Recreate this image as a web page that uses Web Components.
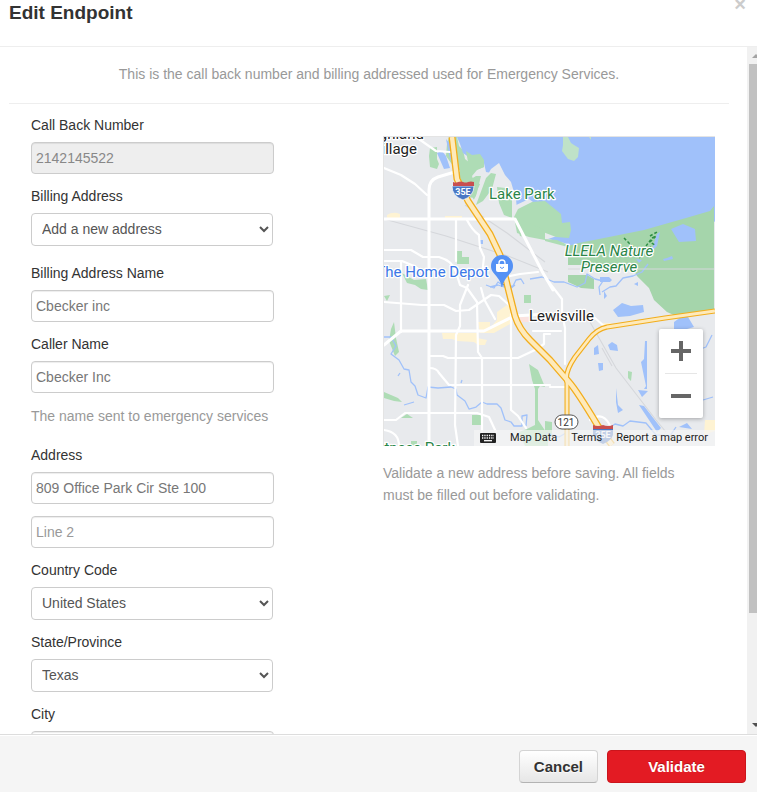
<!DOCTYPE html>
<html lang="en">
<head>
<meta charset="utf-8">
<title>Edit Endpoint</title>
<style>
  html, body { margin: 0; height: 100%; }
  body { font: 14px/20px "Liberation Sans", Arial, sans-serif; color: #333; background: #fff; }
</style>
</head>
<body>
<modal-dialog heading="Edit Endpoint">
  <endpoint-form></endpoint-form>
  <action-button slot="actions">Cancel</action-button>
  <action-button slot="actions" primary>Validate</action-button>
</modal-dialog>

<template id="modal-dialog">
  <style>
    :host { display: flex; flex-direction: column; height: 100vh; overflow: hidden; }
    header { display: flex; justify-content: space-between; align-items: flex-start; padding: 0 11px 20px 9px; border-bottom: 1px solid #eee; }
    h1 { margin: 0; font-size: 19px; line-height: 26px; }
    .close { border: 0; padding: 0; background: none; color: #ccc; font: bold 20px/8px "Liberation Sans", Arial, sans-serif; }
    main { flex: 1; min-height: 0; display: flex; }
    .content { flex: 1; min-width: 0; overflow: hidden; }
    footer { display: flex; justify-content: flex-end; gap: 9px; padding: 15px 11px 9px; background: #f5f5f5; border-top: 1px solid #ddd; box-shadow: inset 0 1px 0 #fff; }
  </style>
  <header><h1></h1><button class="close" type="button" aria-label="Close">×</button></header>
  <main><div class="content"><slot></slot></div><scroll-rail></scroll-rail></main>
  <footer><slot name="actions"></slot></footer>
</template>

<template id="scroll-rail">
  <style>
    :host { display: flex; flex-direction: column; width: 10px; overflow: hidden; background: #f1f1f1; }
    svg { display: block; width: 15px; height: 17px; flex: none; }
    .track { flex: 1; }
    .thumb { height: 84%; margin-left: 2px; background: #c1c1c1; }
  </style>
  <svg viewBox="0 0 15 17"><path d="M5 11h8L9 7z" fill="#a3a3a3"/></svg>
  <div class="track"><div class="thumb"></div></div>
  <svg viewBox="0 0 15 17"><path d="M5 6h8l-4 4z" fill="#505050"/></svg>
</template>

<template id="action-button">
  <style>
    :host { display: block; }
    button { height: 33px; padding: 0 14px; box-sizing: border-box; border: 1px solid #d4d4d4; border-bottom-color: #b3b3b3; border-radius: 4px; background: linear-gradient(#fff, #e6e6e6); color: #333; font: bold 15px/20px "Liberation Sans", Arial, sans-serif; text-shadow: 0 1px 1px rgba(255,255,255,.75); }
    :host([primary]) button { min-width: 139px; background: #e31b23; border-color: #cb151c; color: #fff; text-shadow: 0 -1px 0 rgba(0,0,0,.25); }
  </style>
  <button type="button"><slot></slot></button>
</template>

<template id="form-field">
  <style>
    :host { display: block; margin-bottom: 12px; }
    label { display: block; margin-bottom: 7px; }
    label:empty { display: none; }
    input, select { display: block; box-sizing: border-box; border: 1px solid #ccc; border-radius: 4px; background: #fff; font: inherit; }
    input { width: 243px; height: 32px; padding: 0 4px; color: #777; box-shadow: inset 0 1px 1px rgba(0,0,0,.075); }
    select { width: 242px; height: 33px; padding: 3px 8px 5px 6px; color: #555; }
    input:disabled { background: #eee; color: #888; }
    input::placeholder { color: #999; }
    p { margin: 13px 0 19px; color: #999; }
  </style>
  <label for="control"></label>
</template>

<template id="endpoint-form">
  <style>
    :host { display: block; padding: 0 18px 0 9px; }
    .intro { margin: 0; padding: 17px 0 19px; border-bottom: 1px solid #eee; text-align: center; color: #999; }
    .columns { display: grid; grid-template-columns: 352px minmax(0, 1fr); padding-top: 11px; }
    .fields { padding-left: 22px; }
    .fields form-field.spaced { margin-bottom: 17px; }
    .place { padding: 21px 14px 0 22px; }
    .place p { margin: 16px 0 0; padding-right: 20px; line-height: 22px; color: #999; }
  </style>
  <p class="intro">This is the call back number and billing addressed used for Emergency Services.</p>
  <div class="columns">
    <div class="fields">
      <form-field label="Call Back Number" value="2142145522" disabled></form-field>
      <form-field class="spaced" label="Billing Address" options="Add a new address"></form-field>
      <form-field label="Billing Address Name" value="Cbecker inc"></form-field>
      <form-field label="Caller Name" value="Cbecker Inc" hint="The name sent to emergency services"></form-field>
      <form-field label="Address" value="809 Office Park Cir Ste 100"></form-field>
      <form-field placeholder="Line 2"></form-field>
      <form-field label="Country Code" options="United States"></form-field>
      <form-field label="State/Province" options="Texas"></form-field>
      <form-field label="City"></form-field>
    </div>
    <div class="place">
      <street-map></street-map>
      <p>Validate a new address before saving. All fields must be filled out before validating.</p>
    </div>
  </div>
</template>

<template id="street-map">
  <style>
    :host { display: block; position: relative; overflow: hidden; border: 1px solid #e4e4e4; border-width: 1px 0 0 1px; font-family: Roboto, sans-serif; }
    .map { display: block; width: 100%; height: 309px; }
    .zoom { position: absolute; right: 12px; bottom: 28px; width: 44px; background: #fff; border-radius: 2px; box-shadow: 0 1px 4px rgba(0,0,0,.3); }
    .zoom button { display: block; width: 44px; height: 44px; padding: 12px; border: 0; background: none; }
    .zoom svg { display: block; width: 20px; height: 20px; }
    .zoom hr { margin: 0 6px; border: 0; height: 1px; background: #e6e6e6; }
    .legal { position: absolute; right: 0; bottom: 0; display: flex; align-items: center; gap: 14px; height: 16px; padding: 0 7px 0 6px; background: rgba(245,245,245,.7); font-size: 11px; line-height: 16px; }
    .legal a { color: #222; text-decoration: none; }
    .legal button { border: 0; padding: 0; background: none; color: #222; font: inherit; }
    .legal svg { display: block; }
    .r { fill: none; stroke: #fff; stroke-linejoin: round; stroke-linecap: round; }
    text { font-family: Roboto, sans-serif; paint-order: stroke; stroke: #fff; stroke-width: 2.5px; stroke-linejoin: round; }
  </style>
  <svg class="map" viewBox="384 137 331 309" preserveAspectRatio="xMidYMid slice" role="img" aria-label="Map of Lewisville">
    <rect x="100" y="100" width="900" height="400" fill="#e8eaed"/>
    <g fill="#aedcb5">
      <path d="M449 137h8l2 9 4 4 2 9 5 4 5-5 6 2 3 7-7 3-5 6 2 6 6 2-4 9-5 5-8-10-5-17-7-8-5-7 1-12z"/>
      <path d="M430 148l7-1v12l2 5-2 5-7-2-1-11z"/>
      <path d="M457 251h5v6h7v7h-12zM524 295h7v8h-7zM472 415h9v10h-9z"/>
      <path d="M402 273l12 7 12-1 2 11-7-1-6-4-8-2zM391 329l3-7 2 16 3 14-4 4-6-15zM384 392l14 6 4 4-8-1-10-3zM401 418l6-4 6 4zM411 441h6v5h-6zM384 296l6-1-3 6z"/>
      <path d="M529 364l9 6 7 17-5-1-2 3v31l10 15v11h-23l-6-14 8-3 8-4V389l-3-9z"/>
      <path d="M545 421l7 1v14l-7 1zM628 371l4 1-1 9-3-3z"/>
    </g>
    <path fill="#a0c1fa" d="M457 137l3 7 3 9 7 5 4-3 10 8 2 9 11 2 8 9 4 9 5 14 15-7 16 12 5 1 9 17-2 7-12 4 14 8 18 7 65-13 42-12 36-10v-86z"/>
    <path fill="#a0c1fa" d="M437 153l5-2 4 5 4 12-6 1zM446 139l5 6 5 18-6-4z"/>
    <path fill="#aedcb5" d="M466 151l6 4 8-1 4 6 0 7-8 3-8-8zM471 179l5-3 5 0-3 12-3 13-7-9z"/>
    <path fill="#e8eaed" d="M486 178l5-9 8-6 6 12 6 7 5 17 2 22-18-14-10-9-10 4-8 1z"/>
    <path fill="#aedcb5" d="M486 178l5-5 5 1-4 15-9 12-7 4zM497 187l8 1 7 10 0 20-8-3-5-12z"/>
    <path d="M514 217l4-8 14-7 13-1 16 13 1 9 8-1 1 8-2 8-13-1-13-5-8 5 6 4-21-5z" fill="#aedcb5"/>
    <path d="M516 222l15 6 14 10 23 6v26l-20-12-24-16z" fill="#e8eaed"/>
    <path d="M514 217l31 13v10l-16-3-12-4zM545 239l12 1 11 5v2l-23-6z" fill="#aedcb5"/>
    <path d="M563 137h5l3 6 3 2 5 3-1 9-4 4-6-2-6-8 1-6zM589 137h2v3z" fill="#bfe2c8"/>
    <path d="M568 246l11-3 65-13 42-12 24-7 4-5v105l-38 5-9-4-13-12-5-12-12-12-6-11h-63zM568 275h19l7 4v10l-13-1-13-6z" fill="#a5d5ab"/>
    <g fill="#a0c1fa">
      <path d="M671 229l12-5 12 5 1 12-17 1zM663 259l4-1 5-2 1 3-9 2zM636 259l6 1-3 3zM600 277h9l3 3-2 2h-10zM634 284l4-2v4zM657 234l3-2-3 14-6 6z"/>
      <path d="M613 310l9-7 9 3 12-1 1 7-14 4-12 1zM674 322l7-5 7 0 6 10-14 4-6-2zM608 345l4-3 5 3 1 6-8-1zM594 348l4-3 1 9-5 1zM598 363h5v7l-4 1zM638 390l10 1-6 6zM616 388l2 17 5 5-5 3-2-11zM639 405l5 1 17 22-4 4-6-9zM645 341h2v48h-3l2-3-5-24 3-3zM604 291l3 5-3 3zM679 427l8-4 5 6zM480 240l3 0v4h-3z"/>
    </g>
    <path d="M501 284h3v3h-3z" fill="#4280ef"/>
    <g fill="none" stroke="#a0c1fa" stroke-width="1.3" stroke-linejoin="round">
      <path d="M384 337l7 0 5 9-5 8 8 6 5 9 5 1 2 12 4 4 3 9 8 3 2-11 10 1 13-1 5 2 1 6 8 6 4 8 7-2 6-5 5 2 10 0 4 4 4 12 6 2 3 4h8l0-10 5-1-1 11"/>
      <path d="M486 285l8 3 4-6 7 5 8-1 3-6 5-1 3 5M530 279l12-2 12 5 10 0 13 5 8-4 2-9 8 5 8 2-4 6 1 8M602 292l8-5 6-1 7-8 10-2 9-4 6-8M490 287l8-2 12 4 5-4M546 433l13 4 7-4 3-15M608 429l7-5 8 2 7-5 16 2 10 12 14 1 6-9M698 350l8-3 6-12M703 400l10-3M398 376l2-3M462 380l-1 3M404 405l10-3"/>
    </g>
    <path d="M387 215q6-4 13-1v5h-13zM445 216h17v4h-17zM478 322h12v6l7-8 0-8 10-7 5 2v16l-18 10-14 0zM442 333h35v5l10 2-2 5h-7l-4-3-17-1-5-2h-9zM603 323h8v5h-8zM705 420h10v11l-11 4z" fill="#fef3d3"/>
    <path d="M520 317h9v5h-9z" fill="#fbe3df"/>
    <g fill="none" stroke="#d5d7db" stroke-width="1.100">
      <path d="M384 219l62 17 62 20 40 16M465 205l42 28 38 29M568 269h146M590 322l26 46 40 52 10 12M602 348l10 18"/>
    </g>
    <g class="r" stroke-width="3">
      <path d="M429 446V190q0-10 9-13l20-6M384 219h131l28 54 10 17M384 345l17-14h83l30-15 33-2"/>
    </g>
    <g class="r" stroke-width="2.200">
      <path d="M384 168l17 7 14 9 12 11M384 250h27l12 7h16q14 4 17 15l4 13 7 3 10 14 1 50 4 6v92M384 302l38 3h22l12 6 13-1 22-15 8 1 10 9"/>
      <path d="M416 137l20 14 14 1M456 220v41M467 220q5 10 12 15l1 13 4 9-2 19M384 261h18l12 5 11 8M401 262v70M468 285l-8 20v21l-4 9-1 90 3 21M429 356h14l5 2 70 0 17-8 9-6 0-10h6M429 368q8 0 10 5l10 12h101M511 314v96l7 6 8 12M481 288l3 11 11 20M384 420h12l9-7h72l12 4 7 15M384 430q15 2 15 16M505 277l15-3 18-2"/>
      <path d="M533 331h28M550 387h15M545 277l17 22v14l3 15v36M595 318l9 8M590 420q14-10 21 8"/>
    </g>
    <g fill="none" stroke-linejoin="round">
      <g stroke="#f2ad1c">
        <path stroke-width="7" d="M452 137l5 42 11 22 22 33 10 21 8 33 7 28q4 13 15 24l20 20 19 22q8 9 29 44l14 19"/>
        <path stroke-width="5" d="M567 446v-63q-3-10 8-26l14-18q8-10 18-12l58-9 50-7"/>
      </g>
      <g stroke="#feeabb">
        <path stroke-width="4.400" d="M452 137l5 42 11 22 22 33 10 21 8 33 7 28q4 13 15 24l20 20 19 22q8 9 29 44l14 19"/>
        <path stroke-width="2.800" d="M567 446v-63q-3-10 8-26l14-18q8-10 18-12l58-9 50-7"/>
      </g>
    </g>
    <g fill="none" stroke="#2f8f46" stroke-width="1.500" stroke-dasharray="3 2"><path d="M624 238l8 8 8 12M646 246l6-8 4-2-6 6 5 3M650 236l7-4M641 252l10-5"/></g>
    <g>
      <path d="M452 186q0 10 11 14 11-4 11-14z" fill="#4a77c4" stroke="#fff" stroke-width=".7"/>
      <path d="M453 186v-4q3 1 5 0 3-1 5 0 3 1 5 0 3-1 6 0v4z" fill="#c84f4f"/>
      <text x="463" y="195" text-anchor="middle" style="font-size:9px;font-weight:700;fill:#fff;stroke:none">35E</text>
    </g>
    <g>
      <path d="M593 428h20v7q-2 6-10 9-8-3-10-9z" fill="#4a77c4"/>
      <path d="M593 425q5 2 10 0 5 2 10 0v4h-20z" fill="#c84f4f"/>
      <text x="603" y="438" text-anchor="middle" style="font-size:9px;font-weight:700;fill:#fff;stroke:none">35E</text>
    </g>
    <rect x="555" y="415" width="23" height="14" rx="7" fill="#fff" stroke="#555"/>
    <text x="566" y="426" text-anchor="middle" style="font-size:10px;fill:#333;stroke:none">121</text>
    <path d="M502 255a11 11 0 0 1 11 11c0 8-8 9-11 21-3-12-11-13-11-21a11 11 0 0 1 11-11z" fill="#5491f5"/>
    <path d="M496 264h12v6q0 2-2 2h-8q-2 0-2-2z" fill="#fff"/>
    <path d="M499 265v-2a3 3 0 0 1 6 0v2" fill="none" stroke="#fff" stroke-width="1.300"/>
    <path d="M500 267q2 3 4 0" fill="none" stroke="#5491f5"/>
    <g style="font-size:15px">
      <text x="424" y="139" text-anchor="end" fill="#222">Highland</text>
      <text x="417" y="154" text-anchor="end" fill="#222">Village</text>
      <text x="529" y="321" fill="#222">Lewisville</text>
      <text x="489" y="199" fill="#2a8548">Lake Park</text>
      <text x="489" y="277" text-anchor="end" fill="#3b78e7">The Home Depot</text>
      <g fill="#2a8548" text-anchor="middle" font-style="italic"><text x="609" y="256">LLELA Nature</text><text x="609" y="272">Preserve</text></g>
      <text x="455" y="453" text-anchor="end" fill="#2a8548">Fitness Park</text>
    </g>
  </svg>
  <div class="zoom">
    <button type="button" aria-label="Zoom in"><svg viewBox="0 0 20 20"><path d="M8 0h4v8h8v4h-8v8H8v-8H0V8h8z" fill="#666"/></svg></button>
    <hr>
    <button type="button" aria-label="Zoom out"><svg viewBox="0 0 20 20"><path d="M0 8h20v4H0z" fill="#666"/></svg></button>
  </div>
  <div class="legal">
    <button type="button" aria-label="Keyboard shortcuts"><svg width="16" height="10" viewBox="0 0 16 10"><rect width="16" height="10" rx="1" fill="#222"/><path d="M2 2.500h12M2 5h12" stroke="#fff" stroke-width="1.300" stroke-dasharray="1.300 1"/><path d="M4 7.700h8" stroke="#fff" stroke-width="1.300"/></svg></button>
    <button type="button">Map Data</button><a href="#terms">Terms</a><a href="#report">Report a map error</a>
  </div>
</template>

<script>
  class TemplateElement extends HTMLElement {
    constructor() {
      super();
      this.attachShadow({ mode: 'open' }).append(document.getElementById(this.localName).content.cloneNode(true));
    }
  }
  customElements.define('scroll-rail', class extends TemplateElement {});
  customElements.define('action-button', class extends TemplateElement {});
  customElements.define('street-map', class extends TemplateElement {});
  customElements.define('form-field', class extends TemplateElement {
    connectedCallback() {
      const label = this.shadowRoot.querySelector('label');
      label.textContent = this.getAttribute('label') || '';
      const options = this.getAttribute('options');
      const control = document.createElement(options ? 'select' : 'input');
      control.id = 'control';
      if (options) {
        options.split('|').forEach(name => control.add(new Option(name)));
      } else {
        control.type = 'text';
        control.value = this.getAttribute('value') || '';
        control.placeholder = this.getAttribute('placeholder') || '';
        control.disabled = this.hasAttribute('disabled');
        if (!label.textContent) control.setAttribute('aria-label', control.placeholder);
      }
      label.after(control);
      if (this.hasAttribute('hint')) {
        const hint = document.createElement('p');
        hint.textContent = this.getAttribute('hint');
        control.after(hint);
      }
    }
  });
  customElements.define('endpoint-form', class extends TemplateElement {});
  customElements.define('modal-dialog', class extends TemplateElement {
    connectedCallback() {
      this.shadowRoot.querySelector('h1').textContent = this.getAttribute('heading');
    }
  });
</script>
</body>
</html>
